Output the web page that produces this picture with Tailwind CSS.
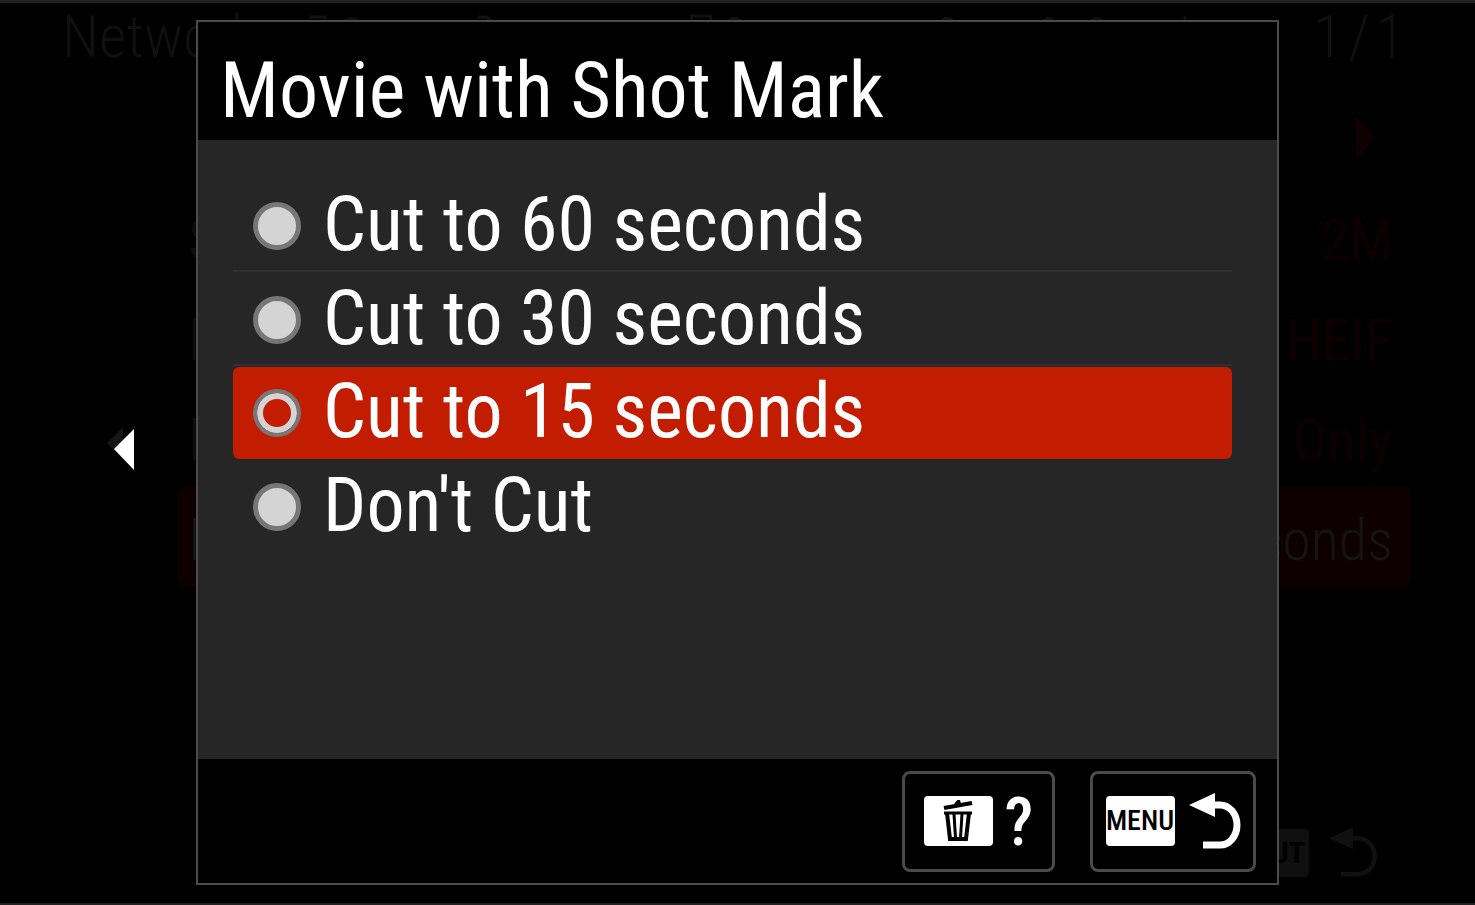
<!DOCTYPE html>
<html lang="en">
<head>
<meta charset="utf-8">
<title>Movie with Shot Mark</title>
<script src="https://cdn.jsdelivr.net/npm/@tailwindcss/browser@4"></script>
</head>
<body class="bg-black text-white font-['Roboto_Condensed','Liberation_Sans_Narrow','Liberation_Sans',sans-serif]">
<div class="relative flex min-h-screen flex-col overflow-hidden border-t-3 border-b-2 border-[#212121]">

  <!-- Dimmed menu page behind the dialog -->
  <main class="flex flex-1 flex-col text-6xl leading-none text-[#0f0000]" aria-hidden="true">
    <header class="flex h-[86px] items-start justify-between pr-[70px] pl-[62px] font-light text-[#101010]">
      <span class="pt-1">Network</span>
      <svg class="mt-2 h-6 flex-1" viewBox="250 0 1060 24" fill="none" stroke="#111111" stroke-width="3" preserveAspectRatio="none">
        <path d="M302 6H318V10M337 11Q345 4 353 11M471 6H480L486 10M686 11V5H705V11M722 11Q729 4 737 11M935 11Q942 4 950 11M1038 11Q1044 4 1050 11M1085 11Q1092 4 1100 11M1181 5V10"/>
      </svg>
      <span class="flex gap-1.5 pt-1"><span>1</span><span>/</span><span>1</span></span>
    </header>
    <ul class="mr-16 ml-[178px]">
      <li class="flex h-[98px] items-center justify-end pr-9">
        <svg class="h-11 w-5" viewBox="0 0 20 44" fill="#110000"><path d="M1 0L20 22L1 44Z"/></svg>
      </li>
      <li class="flex h-[100px] items-center justify-between pt-1.5 pr-[18px] pl-2.5"><span class="text-[#0d0d0d]">Size</span><span class="text-[58px]">2M</span></li>
      <li class="flex h-[100px] items-center justify-between pt-1.5 pr-[18px] pl-2.5"><span class="text-[#0d0d0d]">RAW</span><span class="text-[58px]">HEIF</span></li>
      <li class="flex h-[100px] items-center justify-between pt-1.5 pr-[18px] pl-2.5"><span class="text-[#0d0d0d]">Proxy</span><span class="text-[58px]">Proxy Only</span></li>
      <li class="flex h-[100px] items-center justify-between rounded-lg bg-[#0f0000] pt-1.5 pr-[18px] pl-2.5 font-light text-[#141414]"><span>Movie</span><span class="text-[58px]">15 seconds</span></li>
    </ul>
    <footer class="mt-auto flex items-center justify-end gap-5 pr-[98px] pb-6">
      <span class="flex h-12 items-center rounded bg-[#0f0f0f] px-1 text-3xl font-bold text-black">FN/INPUT</span>
      <svg class="h-[52px] w-12" viewBox="0 0 52 56" fill="none"><path d="M24 12H31A18 19 0 0 1 31 51H13" stroke="#101010" stroke-width="5"/><path d="M0 12L26 0V24Z" fill="#101010"/></svg>
    </footer>
  </main>

  <svg class="absolute top-[422px] left-[106px] h-12 w-7" viewBox="0 0 28 48"><path d="M1 18L17 2V34Z" fill="#151515"/><path d="M8 24L28 4V45Z" fill="#fff"/></svg>

  <!-- Dialog -->
  <div class="absolute inset-0 flex px-[196px] pt-[17px] pb-[18px]">
    <form class="flex flex-1 flex-col border-2 border-[#4b4b4b] bg-black" role="dialog" aria-labelledby="title" onsubmit="return false">
      <h1 id="title" class="flex h-[118px] items-center pt-5 pl-[22px] text-[78px] leading-none">Movie with Shot Mark</h1>
      <div class="flex-1 bg-[#262626] pt-[38px] pr-[45px] pl-[35px] text-[76px] leading-none">
        <label class="flex h-[94px] items-center gap-[22px] border-b-2 border-[#303030] pt-1 pl-5">
          <input type="radio" name="cut" class="size-12 shrink-0 appearance-none rounded-full border-5 border-[#777777] bg-[#d4d4d4] checked:border-4 checked:bg-[#c21d00] checked:inset-ring-6 checked:inset-ring-[#d4d4d4]"><span class="pb-1">Cut to 60 seconds</span></label>
        <label class="flex h-[94px] items-center gap-[22px] border-b-2 border-[#303030] pt-1 pl-5">
          <input type="radio" name="cut" class="size-12 shrink-0 appearance-none rounded-full border-5 border-[#777777] bg-[#d4d4d4] checked:border-4 checked:bg-[#c21d00] checked:inset-ring-6 checked:inset-ring-[#d4d4d4]"><span class="pb-1">Cut to 30 seconds</span></label>
        <label class="my-px flex h-[92px] items-center gap-[22px] rounded-md bg-[#c21d00] pl-5">
          <input type="radio" name="cut" checked class="size-12 shrink-0 appearance-none rounded-full border-5 border-[#777777] bg-[#d4d4d4] checked:border-4 checked:bg-[#c21d00] checked:inset-ring-6 checked:inset-ring-[#d4d4d4]"><span class="pb-1">Cut to 15 seconds</span></label>
        <label class="flex h-[94px] items-center gap-[22px] pl-5">
          <input type="radio" name="cut" class="size-12 shrink-0 appearance-none rounded-full border-5 border-[#777777] bg-[#d4d4d4] checked:border-4 checked:bg-[#c21d00] checked:inset-ring-6 checked:inset-ring-[#d4d4d4]"><span class="pb-1">Don't Cut</span></label>
      </div>
      <footer class="flex h-[124px] items-center justify-end gap-[35px] pr-[21px]">
        <button type="button" aria-label="Help" class="flex h-[101px] w-[153px] items-center justify-center gap-3 rounded-lg border-3 border-[#4a4a4a]">
          <span class="flex h-[50px] w-[69px] items-center justify-center rounded bg-white">
            <svg class="h-[42px] w-[30px]" viewBox="0 0 30 42" fill="none" stroke="#000"><path d="M1 8L29 3" stroke-width="4"/><path d="M12 4L16 0L17 4" fill="#000" stroke-width="2"/><path d="M1 13H29" stroke-width="3"/><path d="M4 13L7 39H23L26 13" stroke-width="4"/><path d="M11 14L12.500 38M19 14L17.500 38" stroke-width="3"/></svg>
          </span>
          <span class="pt-1 text-[66px] leading-none font-medium">?</span>
        </button>
        <button type="button" aria-label="Menu, back" class="flex h-[101px] w-[166px] items-center justify-center gap-3.5 rounded-lg border-3 border-[#4a4a4a]">
          <span class="flex h-[50px] w-[69px] items-center justify-center rounded bg-white text-[28px] leading-none font-medium text-black">MENU</span>
          <svg class="h-14 w-[52px]" viewBox="0 0 52 56" fill="none"><path d="M24 12H31A17 20 0 0 1 31 52H14" stroke="#fff" stroke-width="7"/><path d="M0 12L26 0V24Z" fill="#fff"/></svg>
        </button>
      </footer>
    </form>
  </div>
</div>
</body>
</html>
